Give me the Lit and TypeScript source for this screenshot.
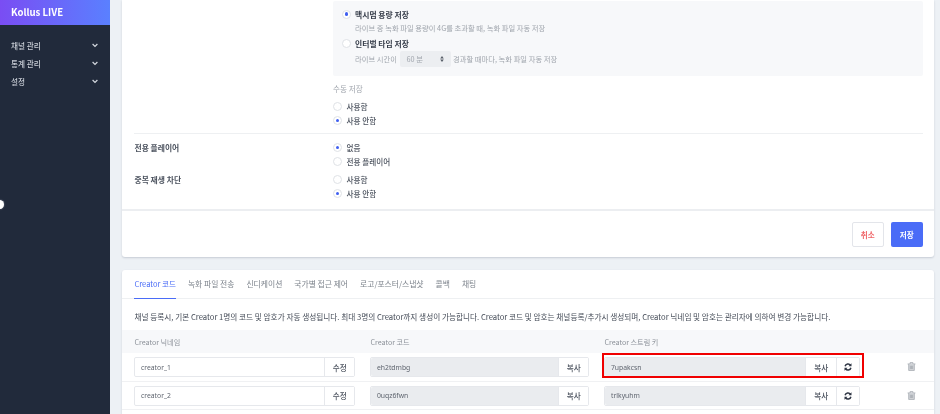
import { LitElement, html, css, svg } from "lit";
import { customElement } from "lit/decorators.js";

const FONT = css`"Noto Sans CJK KR", "Noto Sans", sans-serif`;

const chevron = html`<svg class="chev" viewBox="0 0 10 8" width="6" height="5"><path d="M1 1.5 5 5.5 9 1.5" fill="none" stroke="#d5d9e0" stroke-width="2"/></svg>`;

const refreshIcon = svg`<svg viewBox="0 0 16 16" width="8" height="8"><path d="M2.2 6.5A6 6 0 0 1 13 4.5" fill="none" stroke="#2f3644" stroke-width="3"/><path d="M15 .5v6H9z" fill="#2f3644"/><path d="M13.8 9.5A6 6 0 0 1 3 11.5" fill="none" stroke="#2f3644" stroke-width="3"/><path d="M1 15.5v-6h6z" fill="#2f3644"/></svg>`;

const trashIcon = svg`<svg viewBox="0 0 16 16" width="9" height="9"><path d="M3 4.5h10v10.5H3z" fill="#d3d6da"/><path d="M1 3.5h14M5.5 3.5V1h5v2.5M3 3.5V15h10V3.5M6 6.5V12.5M8 6.5V12.5M10 6.5V12.5" fill="none" stroke="#a4a9b0" stroke-width="1.4"/></svg>`;

const radio = (label: string, on = false) => html`
  <label class="radio-row"><span class="radio ${on ? "on" : ""}"></span><span>${label}</span></label>
`;

@customElement("app-root")
export class AppRoot extends LitElement {
  static styles = css`
    :host { display: block; width: 940px; height: 414px; overflow: hidden; font-family: ${FONT}; color: #3f4653; font-size: 8px; }
    * { box-sizing: border-box; }
    .page { position: relative; display: grid; grid-template-columns: 110.3px 1fr; height: 414px; background: #edf1f5; overflow: hidden; filter: blur(0.3px); }

    .side { background: #212a3b; color: #c9ced6; }
    .brand { height: 24.5px; padding-left: 11px; display: flex; align-items: center; color: #fff; font-size: 9.6px; font-weight: 700; background: linear-gradient(90deg, #7a4df3, #5a80ff); }
    .menu { padding-top: 12px; display: flex; flex-direction: column; }
    .menu div { height: 18px; padding: 0 12px 0 11px; display: flex; align-items: center; justify-content: space-between; font-size: 7.6px; font-weight: 500; }
    .chev { display: block; }
    .knob { position: absolute; left: -5px; top: 200px; width: 9px; height: 9px; border-radius: 50%; background: #fff; box-shadow: 0 0 1.5px #aab; }

    .main { padding: 0 6px 0 12.2px; display: flex; flex-direction: column; gap: 12.5px; min-width: 0; }
    .card { background: #fff; box-shadow: 0 1px 2px rgba(60,75,100,.22); }
    .card.top { border-radius: 0 0 3px 3px; }
    .card.bottom { border-radius: 3px 3px 0 0; flex: 1; }

    .body { padding: 1px 11px 0 12px; height: 209px; }
    .row { display: grid; grid-template-columns: 198.6px 1fr; }
    .panel { height: 74.5px; background: #f7f8fa; border-radius: 2px; padding: 6px 9px 0; }
    .opt { display: flex; gap: 4px; align-items: center; height: 14px; font-weight: 700; font-size: 7.8px; color: #333a47; }
    .sub { padding-left: 13px; height: 14px; display: flex; align-items: center; color: #a0a5ad; font-size: 7.3px; gap: 2.5px; }
    .opt2 { margin-top: 1.5px; }
    .sub2 { height: 17px; }
    .select { width: 51px; height: 16px; background: #eceef1; border-radius: 2px; padding: 0 7px; display: flex; align-items: center; justify-content: space-between; color: #a0a5ad; }
    .title { height: 12px; margin-top: 7px; display: flex; align-items: center; color: #a0a5ad; font-size: 7.6px; }
    .group { display: flex; flex-direction: column; }
    .group.manual { margin-top: 5px; }
    .radio-row { display: flex; align-items: center; gap: 4.5px; height: 14px; font-size: 7.6px; font-weight: 500; color: #4a515d; }
    .radio { flex: none; width: 9px; height: 9px; border-radius: 50%; border: 1px solid #dfe2e6; background: #fff; display: flex; align-items: center; justify-content: center; }
    .radio.on::after { content: ""; width: 3.5px; height: 3.5px; border-radius: 50%; background: #3f5ff0; }
    .divider { height: 1px; background: #eef0f2; margin: 5.5px 0 6.5px; }
    .field-label { height: 14px; display: flex; align-items: center; font-weight: 700; font-size: 7.8px; color: #4a515d; }
    .gap4 { margin-top: 4px; }

    .foot { border-top: 2px solid #eceef1; height: 48px; padding: 11px 11.5px 0 0; display: flex; justify-content: flex-end; gap: 7.5px; }
    .btn { width: 31.5px; height: 24.5px; border-radius: 2px; display: flex; align-items: center; justify-content: center; font-size: 7.6px; font-weight: 700; }
    .btn.cancel { background: #fff; border: 1px solid #e3e5ea; color: #f0676a; }
    .btn.save { background: #4a6cf7; color: #fff; }

    .tabs { height: 29px; padding-left: 12px; display: flex; gap: 12px; border-bottom: 1px solid #eef0f2; }
    .tab { height: 29px; padding-top: 8.5px; line-height: 12px; font-size: 7.8px; color: #7d838c; }
    .tab.active { color: #4a6cf7; border-bottom: 1px solid #4a6cf7; font-size: 7.5px; }
    .desc { height: 31.5px; padding: 4px 0 0 12px; display: flex; align-items: center; font-size: 7.65px; color: #434a56; white-space: nowrap; }
    .grid { display: grid; grid-template-columns: 221px 219px 256px 1fr; column-gap: 15px; padding-left: 12px; align-items: center; }
    .head { height: 23px; padding-top: 1px; background: #f7f8fa; color: #8b9098; font-size: 7.1px; }
    .tr { height: 28.5px; border-bottom: 1px solid #f0f1f3; padding-top: 4px; align-items: start; }
    .ig { position: relative; display: flex; height: 20.4px; border-radius: 2px; border: 1px solid #e6e8ec; font-family: "Noto Sans", sans-serif; font-size: 6.8px; }
    .val { flex: 1; padding-left: 5.5px; display: flex; align-items: center; color: #5f656f; background: #fff; border-radius: 2px 0 0 2px; }
    .val.ro { background: #eaecef; }
    .ig button { all: unset; box-sizing: border-box; flex: none; width: 30.5px; display: flex; align-items: center; justify-content: center; background: #fff; border-left: 1px solid #e6e8ec; color: #4a515d; font-family: ${FONT}; font-size: 7.6px; font-weight: 500; }
    .ig button.ref { width: 23.5px; }
    .trash { padding: 5px 0 0 32px; }
    .trash svg { display: block; }
    .red { position: absolute; left: -3.5px; right: -5px; top: -4.7px; bottom: -2px; border: 2.2px solid #f00000; pointer-events: none; }
  `;

  render() {
    const row = (nick: string, code: string, key: string, mark = false) => html`
      <div class="grid tr">
        <div class="ig"><span class="val">${nick}</span><button>수정</button></div>
        <div class="ig"><span class="val ro">${code}</span><button>복사</button></div>
        <div class="ig"><span class="val ro">${key}</span><button>복사</button><button class="ref">${refreshIcon}</button>${mark ? html`<span class="red"></span>` : ""}</div>
        <div class="trash">${trashIcon}</div>
      </div>`;
    return html`
      <div class="page">
        <aside class="side">
          <div class="brand">Kollus LIVE</div>
          <nav class="menu">
            <div>채널 관리 ${chevron}</div>
            <div>통계 관리 ${chevron}</div>
            <div>설정 ${chevron}</div>
          </nav>
        </aside>
        <span class="knob"></span>
        <main class="main">
          <section class="card top">
            <div class="body">
              <div class="row">
                <div></div>
                <div>
                  <div class="panel">
                    <div class="opt"><span class="radio on"></span>맥시멈 용량 저장</div>
                    <div class="sub">라이브 중 녹화 파일 용량이 4G를 초과할 때, 녹화 파일 자동 저장</div>
                    <div class="opt opt2"><span class="radio"></span>인터벌 타임 저장</div>
                    <div class="sub sub2">라이브 시간이
                      <span class="select">60 분
                        <svg viewBox="0 0 6 10" width="4" height="6"><path d="M3 0 6 4H0zM3 10 0 6h6z" fill="#555b66"/></svg>
                      </span>
                      경과할 때마다, 녹화 파일 자동 저장</div>
                  </div>
                  <div class="title">수동 저장</div>
                  <div class="group manual">
                    ${radio("사용함")}
                    ${radio("사용 안함", true)}
                  </div>
                </div>
              </div>
              <div class="divider"></div>
              <div class="row">
                <div class="field-label">전용 플레이어</div>
                <div class="group">${radio("없음", true)}${radio("전용 플레이어")}</div>
              </div>
              <div class="row gap4">
                <div class="field-label">중복 재생 차단</div>
                <div class="group">${radio("사용함")}${radio("사용 안함", true)}</div>
              </div>
            </div>
            <div class="foot">
              <div class="btn cancel">취소</div>
              <div class="btn save">저장</div>
            </div>
          </section>
          <section class="card bottom">
            <div class="tabs">
              <div class="tab active">Creator 코드</div>
              <div class="tab">녹화 파일 전송</div>
              <div class="tab">신디케이션</div>
              <div class="tab">국가별 접근 제어</div>
              <div class="tab">로고/포스터/스냅샷</div>
              <div class="tab">콜백</div>
              <div class="tab">채팅</div>
            </div>
            <div class="desc">채널 등록시, 기본 Creator 1명의 코드 및 암호가 자동 생성됩니다. 최대 3명의 Creator까지 생성이 가능합니다. Creator 코드 및 암호는 채널등록/추가시 생성되며, Creator 닉네임 및 암호는 관리자에 의하여 변경 가능합니다.</div>
            <div class="grid head">
              <div>Creator 닉네임</div><div>Creator 코드</div><div>Creator 스트림 키</div><div></div>
            </div>
            ${row("creator_1", "eh2tdmbg", "7upakcsn", true)}
            ${row("creator_2", "0uqz6fwn", "trlkyuhm")}
          </section>
        </main>
      </div>
    `;
  }
}
